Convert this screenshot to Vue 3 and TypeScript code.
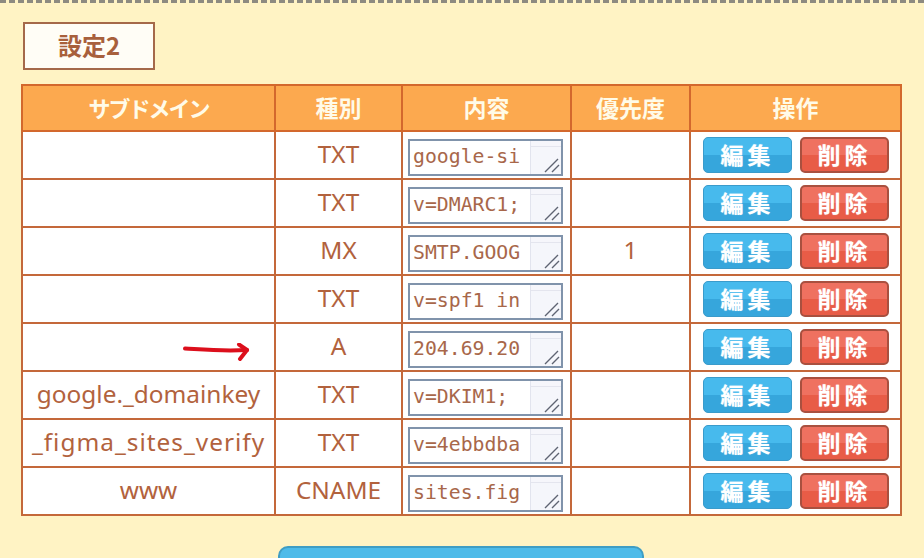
<script setup lang="ts">
interface Row { sub: string; type: string; content: string; prio: string; arrow?: boolean; wide?: boolean }
const rows: Row[] = [
  { sub: '', type: 'TXT', content: 'google-si', prio: '' },
  { sub: '', type: 'TXT', content: 'v=DMARC1;', prio: '' },
  { sub: '', type: 'MX', content: 'SMTP.GOOG', prio: '1' },
  { sub: '', type: 'TXT', content: 'v=spf1 in', prio: '' },
  { sub: '', type: 'A', content: '204.69.20', prio: '', arrow: true },
  { sub: 'google._domainkey', type: 'TXT', content: 'v=DKIM1;', prio: '' },
  { sub: '_figma_sites_verify', type: 'TXT', content: 'v=4ebbdba', prio: '', wide: true },
  { sub: 'www', type: 'CNAME', content: 'sites.fig', prio: '' },
]
</script>

<template>
  <div class="page">
    <div class="dash"></div>
    <h2 class="title">設定2</h2>
    <table class="tbl">
      <colgroup>
        <col class="c1" />
        <col class="c2" />
        <col class="c3" />
        <col class="c4" />
        <col class="c5" />
      </colgroup>
      <thead>
        <tr>
          <th class="kana">サブドメイン</th>
          <th>種別</th>
          <th>内容</th>
          <th>優先度</th>
          <th>操作</th>
        </tr>
      </thead>
      <tbody>
        <tr v-for="(r, i) in rows" :key="i">
          <td class="sub">
            <span class="val" :class="{ wide: r.wide }">{{ r.sub }}</span>
            <svg v-if="r.arrow" class="arrow" width="74" height="20" viewBox="0 0 74 20">
              <path d="M3 5.500C20 6.500 40 8.500 65 7" fill="none" stroke="#dc0f1c" stroke-width="4" stroke-linecap="round" />
              <path d="M57 1.500L65 7L58 16" fill="none" stroke="#dc0f1c" stroke-width="4" stroke-linecap="round" stroke-linejoin="round" />
            </svg>
          </td>
          <td><span class="val">{{ r.type }}</span></td>
          <td class="cc">
            <div class="ta">
              <span class="tx">{{ r.content }}</span>
              <span class="sb">
                <svg class="grip" width="16" height="16" viewBox="0 0 16 16">
                  <path d="M1 15L14 2M8 15L15 8" stroke="#5f6472" stroke-width="1.400" fill="none" />
                </svg>
              </span>
            </div>
          </td>
          <td><span class="val">{{ r.prio }}</span></td>
          <td class="ops">
            <div class="btns">
              <span class="btn blue">編集</span>
              <span class="btn red">削除</span>
            </div>
          </td>
        </tr>
      </tbody>
    </table>
    <div class="bigbtn"></div>
  </div>
</template>

<style>
html, body { margin: 0; padding: 0; background: #fff3c4; overflow: hidden; }
</style>

<style scoped>
.page {
  width: 924px;
  height: 558px;
  background: #fff3c4;
  overflow: hidden;
  box-sizing: border-box;
  font-family: "Noto Sans CJK JP", "Noto Sans", sans-serif;
  color: #b2623d;
}
.dash {
  height: 0;
  border-top: 3px dashed #8d8a80;
}
.title {
  margin: 19px 0 0 23px;
  width: 132px;
  height: 48px;
  box-sizing: border-box;
  border: 2px solid #a5694a;
  background: #fffdf6;
  color: #a8603c;
  font-size: 24px;
  font-weight: 700;
  line-height: 42px;
  text-align: center;
}
.tbl {
  margin: 14px 0 0 21px;
  width: 879px;
  table-layout: fixed;
  border-collapse: collapse;
  background: #fff;
  border: 2px solid #c4683a;
  font-family: "Noto Sans", "Noto Sans CJK JP", sans-serif;
}
.c1 { width: 253px; }
.c2 { width: 127px; }
.c3 { width: 169px; }
.c4 { width: 119px; }
.c5 { width: 211px; }
th {
  height: 46px;
  padding: 0 0 2px;
  box-sizing: border-box;
  background: #fca94f;
  border: 2px solid #d3682d;
  color: #fffbe8;
  font-family: "Noto Sans CJK JP", sans-serif;
  font-size: 23px;
  font-weight: 700;
  text-align: center;
}
th.kana {
  font-size: 22px;
  letter-spacing: -2px;
}
td {
  height: 46px;
  padding: 0;
  border: 2px solid #c4683a;
  font-size: 24.400px;
  font-weight: 400;
  text-align: center;
  color: #b2623d;
  white-space: nowrap;
}
.val {
  display: block;
  margin-top: -4px;
}
.wide { letter-spacing: 1px; }
.sub { position: relative; }
.arrow { position: absolute; left: 159px; top: 19px; }
.cc { padding: 0 7px 0 5px; }
.ta {
  display: flex;
  height: 37px;
  box-sizing: border-box;
  border: 2px solid #8093ab;
  background: #fff;
  justify-content: space-between;
  margin-top: 5px;
}
.tx {
  font-family: "DejaVu Sans Mono", monospace;
  font-size: 19.800px;
  line-height: 32px;
  padding-left: 3px;
  color: #a8674a;
}
.sb {
  position: relative;
  flex: none;
  width: 30px;
  background: linear-gradient(#f6f6fb 0 5px, #e4e5ee 5px 6px, #f5f6fb 6px);
  border-left: 1px solid #e2e4ee;
}
.grip { position: absolute; right: 1px; bottom: 1px; }
.ops { padding: 0; }
.btns { display: flex; gap: 8px; justify-content: center; }
.btn {
  width: 89px;
  height: 36px;
  box-sizing: border-box;
  border-radius: 5px;
  padding-left: 1px;
  color: #fff;
  font-family: "Noto Sans CJK JP", sans-serif;
  font-size: 23px;
  font-weight: 700;
  line-height: 32px;
  letter-spacing: 4px;
  text-shadow: 0 0 1px rgba(255, 255, 255, .6);
}
.blue {
  background: linear-gradient(#47baed 0 50%, #36a6dc 50%);
  border: 1px solid #3a9bcb;
}
.red {
  background: linear-gradient(#ef7160 0 50%, #e85c47 50%);
  border: 2px solid #a9503f;
  line-height: 30px;
}
.bigbtn {
  margin: 30px 0 0 278px;
  width: 366px;
  height: 40px;
  background: #4ebbe9;
  border: 2px solid #3f9dc4;
  border-radius: 10px;
  box-sizing: border-box;
}
</style>
